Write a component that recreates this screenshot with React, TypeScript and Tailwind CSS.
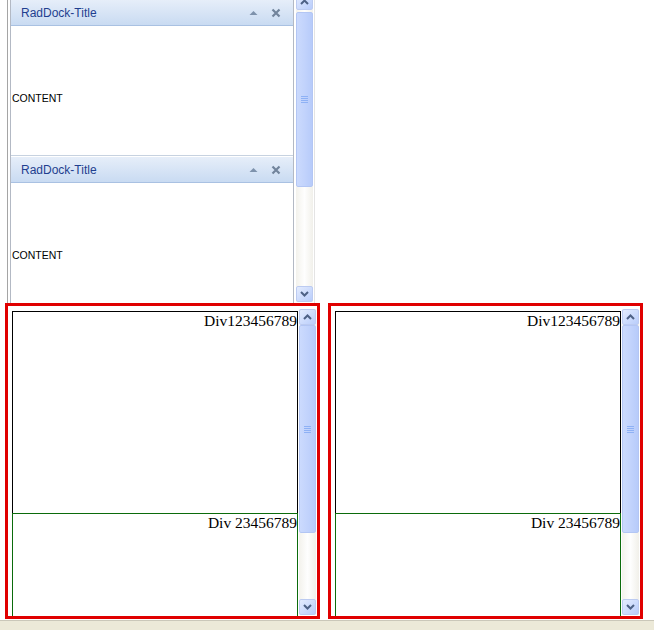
import React from "react";

const Chevron = ({ up }: { up?: boolean }) => (
  <svg width="9" height="6" viewBox="0 0 9 6">
    <polyline
      points={up ? "1,5 4.5,1.5 8,5" : "1,1 4.5,4.5 8,1"}
      fill="none"
      stroke="#4d6185"
      strokeWidth="2"
    />
  </svg>
);

const ArrowButton = ({ up, className = "" }: { up?: boolean; className?: string }) => (
  <div
    className={`h-[16px] w-full shrink-0 flex items-center justify-center rounded-[2px] border border-[#bccbf1] bg-gradient-to-br from-[#e4ecfe] to-[#b9cdfb] ${className}`}
  >
    <Chevron up={up} />
  </div>
);

const Grip = () => (
  <div className="flex flex-col gap-[1px] items-center">
    <div className="h-[1px] w-[7px] bg-[#8eb1f5]" />
    <div className="h-[1px] w-[7px] bg-[#8eb1f5]" />
    <div className="h-[1px] w-[7px] bg-[#8eb1f5]" />
    <div className="h-[1px] w-[7px] bg-[#8eb1f5]" />
  </div>
);

type BarProps = {
  upShift: number;
  thumbTop: number;
  thumbHeight: number;
};

// XP style vertical scrollbar: up button, track with thumb, down button
const ScrollBar = ({ upShift, thumbTop, thumbHeight }: BarProps) => (
  <div className="h-full w-[17px] flex flex-col bg-gradient-to-r from-[#f3f2ec] via-[#fefefe] to-[#f1f0ea] overflow-hidden">
    <ArrowButton up />
    <div className="flex-1 flex flex-col" style={{ marginTop: upShift }}>
      <div
        className="w-full rounded-[2px] border border-[#b3c6f4] bg-gradient-to-r from-[#cbdafd] via-[#c2d3fc] to-[#b7cbfa] flex items-center justify-center"
        style={{ marginTop: thumbTop, height: thumbHeight }}
      >
        <Grip />
      </div>
    </div>
    <ArrowButton />
  </div>
);

const Dock = () => (
  <div className="h-[156px] shrink-0 border-b border-[#c7d2e0] flex flex-col">
    <div className="h-[26px] shrink-0 border-b border-[#a9c1e2] bg-gradient-to-b from-[#e6eef9] to-[#c9dbf2] flex items-center pl-[10px] pr-[8px]">
      <span className="flex-1 text-[12px] text-[#1f3f8f] font-['Liberation_Sans',sans-serif]">
        RadDock-Title
      </span>
      <svg width="9" height="6" viewBox="0 0 9 6" className="mr-[13px]">
        <polygon points="0.5,5 4.5,1 8.5,5" fill="#7e92ac" />
      </svg>
      <svg width="10" height="10" viewBox="0 0 10 10" className="mr-[4px]">
        <path d="M1.5 1.5 L8.5 8.5 M8.5 1.5 L1.5 8.5" stroke="#72849c" strokeWidth="2.2" />
      </svg>
    </div>
    <div className="flex-1 bg-white pl-[1px] pt-[58px]">
      <span className="text-[10.5px] leading-[14px] text-black font-['Liberation_Sans',sans-serif]">
        CONTENT
      </span>
    </div>
  </div>
);

const DivBox = () => (
  <div className="w-[315px] h-[316px] border-[3px] border-[#e00000] bg-white flex">
    <div className="w-[291px] pl-[4px] pt-[5px] overflow-hidden">
      <div className="w-[286px] h-[202px] border border-b-0 border-black text-right font-['Liberation_Serif',serif] text-[15.5px] leading-[18px] text-black">
        Div123456789
      </div>
      <div className="w-[286px] h-[120px] border border-[#0b6b0b] text-right font-['Liberation_Serif',serif] text-[15.5px] leading-[18px] text-black">
        Div 23456789
      </div>
    </div>
    <div className="pt-[3px] pb-[1px] h-full">
      <ScrollBar upShift={0} thumbTop={0} thumbHeight={208} />
    </div>
  </div>
);

export default function App() {
  return (
    <div className="w-[654px] h-[630px] bg-white flex flex-col overflow-hidden">
      <div className="ml-[7px] w-[308px] h-[303px] shrink-0 flex border-l border-[#a5a5a5]">
        <div className="ml-[2px] w-[284px] h-full border-x border-[#b3b9c4] flex flex-col gap-[1px] overflow-hidden">
          <Dock />
          <Dock />
        </div>
        <div className="ml-[2px] h-[303px] flex flex-col overflow-hidden">
          <div className="-mt-[6px] h-[308px]">
            <ScrollBar upShift={2} thumbTop={0} thumbHeight={175} />
          </div>
        </div>
        <div className="w-[1px] h-full bg-[#e4e4e4] ml-[1px]" />
      </div>
      <div className="flex pl-[5px] gap-[8px] shrink-0">
        <DivBox />
        <DivBox />
      </div>
      <div className="mt-[1px] flex-1 border-t border-[#cac7b9] bg-[#ece9d8]" />
    </div>
  );
}
